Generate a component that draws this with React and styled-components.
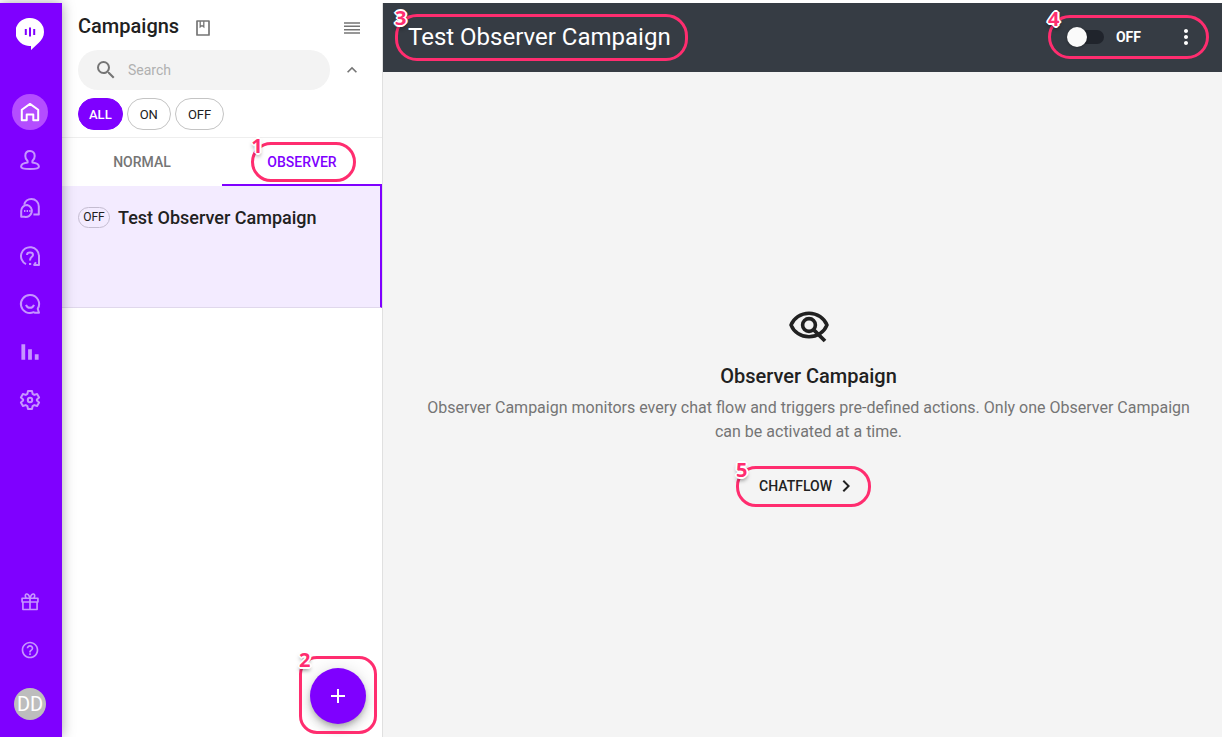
import React from "react"
import styled, { createGlobalStyle } from "styled-components"
import {
  MdSearch,
  MdKeyboardArrowUp,
  MdChevronRight,
  MdMoreVert,
  MdAdd,
  MdHelpOutline,
} from "react-icons/md"

const navItems = [
  {
    label: "Home",
    active: true,
    icon: <path d="M3.800 20.200V9.800L12 3.900l8.200 5.900v10.400h-4.900v-5.600H8.700v5.600z" />,
  },
  {
    label: "Contacts",
    icon: (
      <path d="M12 3c-3 0-4.700 2.100-4.700 4.900 0 2.200.9 4 2.300 5.200v1.500c-3.300.4-6.500 1.500-6.500 4.100 0 1.700 3.800 2.300 8.900 2.300s8.900-.6 8.900-2.300c0-2.600-3.200-3.700-6.500-4.100v-1.500c1.400-1.200 2.300-3 2.300-5.200C16.700 5.100 15 3 12 3z" />
    ),
  },
  {
    label: "Chats",
    icon: (
      <>
        <path d="M6.200 8.800C6.900 5.400 9.900 3 13.400 3c4.100 0 7.400 3.300 7.400 7.400v8.200h-5.400" />
        <path d="M9.200 9a5.900 5.900 0 1 1-2.800 11.800H3.200v-5.900A5.900 5.900 0 0 1 9.200 9z" />
        <path d="M6 15h1.400M8.600 15H10M11.200 15h1.400" />
      </>
    ),
  },
  {
    label: "Questions",
    icon: (
      <>
        <path d="M8 20.200A9 9 0 1 1 21 12v8.900h-4.800l1.700-2.700" />
        <path d="M9 11c0-1.400 1.200-2.400 3-2.400s3 1 3 2.400c0 1.900-3 2-3 5.400" />
        <path d="M11 20h2.200" />
      </>
    ),
  },
  {
    label: "Engagement",
    icon: (
      <>
        <path d="M12 3a9 9 0 1 0 3.600 17.200l1.400.6h4l-1.300-4A9 9 0 0 0 12 3z" />
        <path d="M8 12.800c.7 2 2.200 3 4 3s3.300-1 4-3" />
      </>
    ),
  },
  {
    label: "Reports",
    icon: <path d="M5.300 4.200v15.600M12 9.300v10.500M18.700 14.300v5.500" strokeWidth="3.800" />,
  },
  {
    label: "Settings",
    icon: (
      <>
        <path d="M10 3h4l.6 2.900 1.700 1 2.800-.9 2 3.400-2.200 2v1.200l2.200 2-2 3.400-2.800-.9-1.700 1L14 21h-4l-.6-2.900-1.700-1-2.800.9-2-3.400 2.200-2v-1.200l-2.200-2 2-3.400 2.800.9 1.700-1z" />
        <circle cx="12" cy="12" r="2.200" />
      </>
    ),
  },
]

const filters = ["ALL", "ON", "OFF"]

function Logo() {
  return (
    <svg width="28" height="32" viewBox="0 0 28 32" aria-hidden="true">
      <path
        fill="#fff"
        d="M14 0a14 14 0 0 1 14 14c0 4.500-2.200 8-5.200 10.800L15 32v-4.100A14 14 0 1 1 14 0z"
      />
      <path d="M9.800 11v6M14 9.500v9M18.200 11v6" stroke="#7f00ff" strokeWidth="2" />
    </svg>
  )
}

function LineIcon({ children, size = 24 }) {
  return (
    <svg
      width={size}
      height={size}
      viewBox="0 0 24 24"
      fill="none"
      stroke="currentColor"
      strokeWidth="2"
      strokeLinejoin="round"
      aria-hidden="true"
    >
      {children}
    </svg>
  )
}

function ObserverIcon() {
  return (
    <svg width="40" height="32" viewBox="0 0 40 32" fill="none" stroke="#212121" aria-hidden="true">
      <path
        d="M20 2.200C11.800 2.200 4.800 7 2 14c2.800 7 9.800 11.800 18 11.800S35.200 21 38 14C35.200 7 28.200 2.200 20 2.200z"
        strokeWidth="3.400"
      />
      <circle cx="20" cy="14" r="6.400" strokeWidth="3.600" />
      <path d="M24 18.200L36 30" strokeWidth="3.800" />
    </svg>
  )
}

function Marked({ number, shape, children }) {
  return (
    <Anchor>
      {children}
      <Ring $shape={shape}>
        <Badge>{number}</Badge>
      </Ring>
    </Anchor>
  )
}

export default function App() {
  return (
    <>
      <GlobalStyle />
      <Page>
        <Rail>
          <Logo />
          <Nav>
            {navItems.map(({ label, active, icon }) => (
              <NavButton key={label} aria-label={label} $active={active}>
                <LineIcon>{icon}</LineIcon>
              </NavButton>
            ))}
          </Nav>
          <NavButton aria-label="What's new">
            <LineIcon size={20}>
              <path d="M2.500 7.500h19v4.500h-19zM3.500 12h17v9h-17zM12 7.500V21M12 7C10.500 3 9 2 7.500 2.500S6 6 7.500 7.200M12 7c1.500-4 3-5 4.500-4.500S18 6 16.500 7.200" />
            </LineIcon>
          </NavButton>
          <NavButton aria-label="Help">
            <MdHelpOutline size={20} />
          </NavButton>
          <Avatar>DD</Avatar>
        </Rail>

        <Panel>
          <PanelHeader>
            <PanelTitle>Campaigns</PanelTitle>
            <IconButton aria-label="Guide">
              <svg width="16" height="18" viewBox="0 0 16 18" fill="none" stroke="currentColor">
                <path d="M2 2h12v14H2z" strokeWidth="1.700" strokeLinejoin="round" />
                <path d="M5.200 2v6L7 6.600 8.800 8V2" strokeWidth="1.300" />
              </svg>
            </IconButton>
            <IconButton aria-label="List density" $end>
              <svg width="16" height="12" viewBox="0 0 16 12" stroke="currentColor">
                <path d="M0 1h16M0 4.300h16M0 7.700h16M0 11h16" strokeWidth="1.600" />
              </svg>
            </IconButton>
          </PanelHeader>
          <SearchRow>
            <SearchField>
              <MdSearch size={24} />
              <input type="search" placeholder="Search" aria-label="Search" />
            </SearchField>
            <IconButton aria-label="Collapse filters">
              <MdKeyboardArrowUp size={20} />
            </IconButton>
          </SearchRow>
          <Chips>
            {filters.map((name, index) => (
              <Chip key={name} $active={index === 0}>
                {name}
              </Chip>
            ))}
          </Chips>
          <Tabs role="tablist">
            <Tab role="tab" aria-selected="false">
              NORMAL
            </Tab>
            <Tab role="tab" aria-selected="true" $active>
              <Marked number={1} shape="tab">
                OBSERVER
              </Marked>
            </Tab>
          </Tabs>
          <Campaign>
            <Status>OFF</Status>
            <h2>Test Observer Campaign</h2>
          </Campaign>
          <AddArea>
            <Marked number={2} shape="fab">
              <Fab aria-label="Add campaign">
                <MdAdd size={24} />
              </Fab>
            </Marked>
          </AddArea>
        </Panel>

        <Main>
          <MainHeader>
            <Marked number={3} shape="title">
              <h1>Test Observer Campaign</h1>
            </Marked>
            <Marked number={4} shape="controls">
              <Controls>
                <SwitchLabel>
                  <Switch type="checkbox" role="switch" />
                  OFF
                </SwitchLabel>
                <IconButton aria-label="More" $light>
                  <MdMoreVert size={24} />
                </IconButton>
              </Controls>
            </Marked>
          </MainHeader>
          <Empty>
            <ObserverIcon />
            <h2>Observer Campaign</h2>
            <p>
              Observer Campaign monitors every chat flow and triggers pre-defined actions. Only one
              Observer Campaign can be activated at a time.
            </p>
            <Marked number={5} shape="flow">
              <FlowButton>
                CHATFLOW
                <MdChevronRight size={24} />
              </FlowButton>
            </Marked>
          </Empty>
        </Main>
      </Page>
    </>
  )
}

const GlobalStyle = createGlobalStyle`
  :root {
    --clr-primary: #7f00ff;
    --clr-text: #212121;
    --clr-grey: #757575;
    --clr-mark: #ff2d6f;
  }
  *, *::before, *::after {
    box-sizing: border-box;
  }
  body {
    margin: 0;
    background: #fff;
    color: var(--clr-text);
    font-family: Roboto, "Liberation Sans", sans-serif;
    font-size: 14px;
  }
  button, input {
    font: inherit;
    color: inherit;
  }
  button {
    border: 0;
    padding: 0;
    background: none;
    cursor: pointer;
  }
  h1, h2, p {
    margin: 0;
  }
  svg {
    display: block;
    flex: none;
  }
`

const Page = styled.div`
  display: flex;
  min-height: 100vh;
  padding-top: 3px;
`

const Rail = styled.aside`
  position: relative;
  z-index: 1;
  flex: none;
  display: flex;
  flex-direction: column;
  align-items: center;
  width: 62px;
  padding: 15px 2px 17px 0;
  background: var(--clr-primary);
  box-shadow: 0 0 12px rgba(0, 0, 0, 0.35);
`

const Nav = styled.nav`
  flex: 1;
  display: flex;
  flex-direction: column;
  gap: 12px;
  padding-top: 44px;
`

const NavButton = styled.button`
  display: grid;
  place-items: center;
  width: 36px;
  height: 36px;
  border-radius: 50%;
  color: ${({ $active }) => ($active ? "#fff" : "#c695ff")};
  background: ${({ $active }) => ($active ? "#b44dff" : "none")};
  ${Nav} + & {
    margin-bottom: 12px;
  }
`

const Avatar = styled.div`
  width: 32px;
  margin-top: 20px;
  border-radius: 50%;
  background: #bdbdbd;
  color: #fff;
  font-size: 20px;
  line-height: 32px;
  text-align: center;
`

const Panel = styled.section`
  position: relative;
  flex: none;
  width: 321px;
  border-right: 1px solid #e0e0e0;
`

const PanelHeader = styled.header`
  display: flex;
  align-items: center;
  gap: 10px;
  height: 47px;
  padding: 2px 16px 0;
`

const PanelTitle = styled.h2`
  padding-bottom: 4px;
  font-size: 20px;
  font-weight: 500;
  line-height: 24px;
`

const IconButton = styled.button`
  display: grid;
  place-items: center;
  width: 28px;
  height: 28px;
  margin-left: ${({ $end }) => ($end ? "auto" : "0")};
  color: ${({ $light }) => ($light ? "#fff" : "var(--clr-grey)")};
`

const SearchRow = styled.div`
  display: flex;
  align-items: center;
  gap: 8px;
  padding: 0 16px;
`

const SearchField = styled.label`
  flex: 1;
  display: flex;
  align-items: center;
  gap: 10px;
  height: 40px;
  padding: 0 16px;
  border-radius: 20px;
  background: #f3f3f3;
  color: var(--clr-grey);
  input {
    flex: 1;
    min-width: 0;
    border: 0;
    padding: 0;
    background: none;
    outline: none;
  }
  input::placeholder {
    color: #b0b0b0;
  }
`

const Chips = styled.div`
  display: flex;
  gap: 4px;
  padding: 8px 16px 7px;
  border-bottom: 1px solid #eee;
`

const Chip = styled.button`
  height: 32px;
  padding: 0 ${({ $active }) => ($active ? "10px" : "12px")};
  border: 1px solid ${({ $active }) => ($active ? "var(--clr-primary)" : "#c4c4c4")};
  border-radius: 16px;
  background: ${({ $active }) => ($active ? "var(--clr-primary)" : "#fff")};
  color: ${({ $active }) => ($active ? "#fff" : "var(--clr-text)")};
  font-size: 13px;
  font-weight: ${({ $active }) => ($active ? 500 : 400)};
`

const Tabs = styled.div`
  display: grid;
  grid-template-columns: 1fr 1fr;
  height: 48px;
`

const Tab = styled.button`
  display: grid;
  place-items: center;
  padding-top: 2px;
  border-bottom: 2px solid ${({ $active }) => ($active ? "var(--clr-primary)" : "transparent")};
  color: ${({ $active }) => ($active ? "var(--clr-primary)" : "var(--clr-grey)")};
  font-weight: 500;
`

const Campaign = styled.article`
  display: flex;
  align-items: flex-start;
  gap: 8px;
  height: 122px;
  padding: 20px 16px;
  border-right: 2px solid var(--clr-primary);
  border-bottom: 1px solid #e0d8ec;
  background: #f3ebff;
  h2 {
    font-size: 18px;
    font-weight: 500;
    line-height: 24px;
  }
`

const Status = styled.span`
  width: 32px;
  margin-top: 1px;
  border: 1px solid #c4bcd0;
  border-radius: 11px;
  font-size: 12px;
  line-height: 19px;
  text-align: center;
`

const AddArea = styled.div`
  position: absolute;
  right: 16px;
  bottom: 13px;
`

const Fab = styled.button`
  display: grid;
  place-items: center;
  width: 56px;
  height: 56px;
  border-radius: 50%;
  background: var(--clr-primary);
  color: #fff;
  box-shadow: 0 3px 5px -1px rgba(0, 0, 0, 0.2), 0 6px 10px rgba(0, 0, 0, 0.14),
    0 1px 18px rgba(0, 0, 0, 0.12);
`

const Main = styled.main`
  flex: 1;
  display: flex;
  flex-direction: column;
  min-width: 0;
  background: #f4f4f4;
`

const MainHeader = styled.header`
  display: flex;
  align-items: center;
  justify-content: space-between;
  height: 69px;
  padding: 0 22px 2px 25px;
  background: #363c44;
  color: #fff;
  h1 {
    font-size: 24px;
    font-weight: 400;
    line-height: 32px;
  }
`

const Controls = styled.div`
  display: flex;
  align-items: center;
  gap: 31px;
`

const SwitchLabel = styled.label`
  display: flex;
  align-items: center;
  gap: 12px;
  font-weight: 700;
`

const Switch = styled.input`
  appearance: none;
  display: flex;
  align-items: center;
  width: 34px;
  height: 14px;
  margin: 0;
  border-radius: 7px;
  background: #20242c;
  &::before {
    content: "";
    flex: none;
    width: 20px;
    height: 20px;
    margin-left: -3px;
    border-radius: 50%;
    background: #fafafa;
    box-shadow: 0 1px 3px rgba(0, 0, 0, 0.3);
  }
`

const Empty = styled.div`
  flex: 1;
  display: flex;
  flex-direction: column;
  align-items: center;
  justify-content: center;
  padding: 6px 24px 0 36px;
  text-align: center;
  h2 {
    margin-top: 19px;
    font-size: 20px;
    font-weight: 500;
    line-height: 28px;
  }
  p {
    margin: 6px 0 24px;
    color: var(--clr-grey);
    font-size: 16px;
    line-height: 24px;
  }
`

const FlowButton = styled.button`
  display: flex;
  align-items: center;
  gap: 2px;
  height: 36px;
  font-weight: 500;
`

const Anchor = styled.div`
  position: relative;
`

const shapes = {
  tab: "inset: -12px -19px -12px -16px; border-radius: 20px;",
  fab: "inset: -12px -11px -10px; border-radius: 18px;",
  title: "inset: -7px -17px -8px -13px; border-radius: 22px;",
  controls: "inset: -8px -9px -8px -22px; border-radius: 22px;",
  flow: "inset: -2px -13px -3px -23px; border-radius: 20px;",
}

const Ring = styled.div`
  position: absolute;
  border: 3px solid var(--clr-mark);
  pointer-events: none;
  ${({ $shape }) => shapes[$shape]}
`

const Badge = styled.span`
  position: absolute;
  top: -11px;
  left: -3px;
  color: var(--clr-mark);
  font-family: "Open Sans", sans-serif;
  font-size: 20px;
  font-weight: 700;
  line-height: 24px;
  text-shadow: 2px 0 #fff, -2px 0 #fff, 0 2px #fff, 0 -2px #fff, 1px 1px #fff, -1px 1px #fff,
    1px -1px #fff, -1px -1px #fff, 0 3px 4px rgba(0, 0, 0, 0.6);
`
